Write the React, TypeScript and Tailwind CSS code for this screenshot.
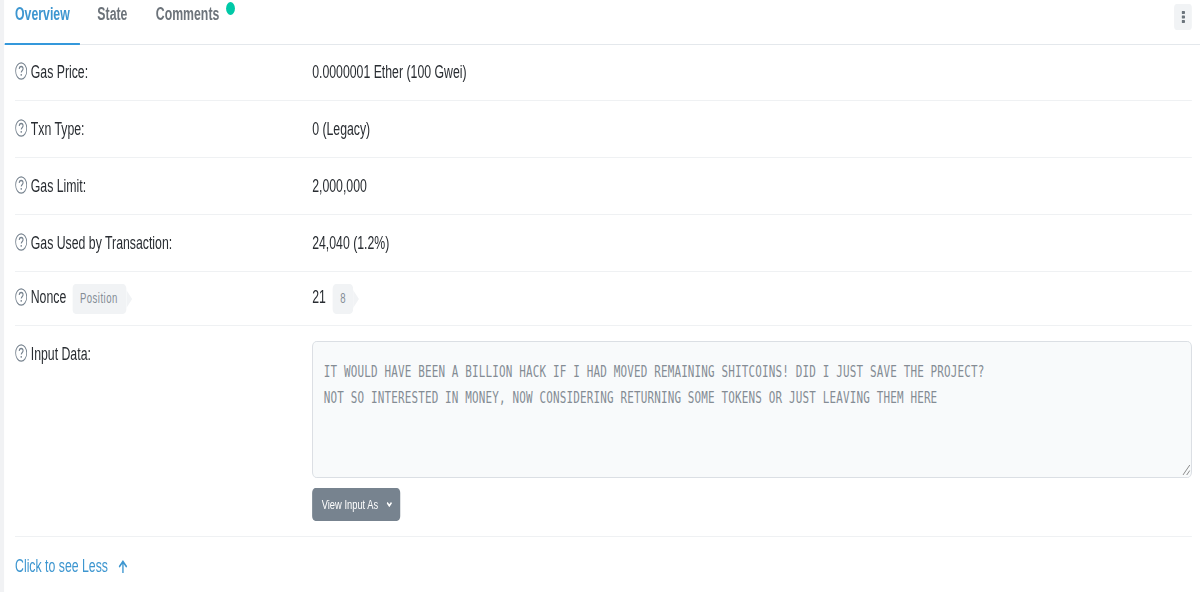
import type { ReactNode } from "react";

const tabs = ["Overview", "State", "Comments"];

const message = [
  "IT WOULD HAVE BEEN A BILLION HACK IF I HAD MOVED REMAINING SHITCOINS! DID I JUST SAVE THE PROJECT?",
  "NOT SO INTERESTED IN MONEY, NOW CONSIDERING RETURNING SOME TOKENS OR JUST LEAVING THEM HERE",
];

function HelpIcon() {
  return (
    <svg width="18" height="18" viewBox="0 0 18 18" fill="none" stroke="#77838f" className="-mt-[3px] mr-[5px] shrink-0">
      <circle cx="9" cy="9" r="8.1" strokeWidth="1.2" />
      <path d="M6.2 7C6.2 5.2 7.4 4.4 9 4.4s2.8.9 2.8 2.3c0 1.9-2.7 1.8-2.7 3.8" strokeWidth="1.5" />
      <path d="M9.1 11.9v1.8" strokeWidth="1.8" />
    </svg>
  );
}

function Badge({ children, className }: { children: ReactNode; className: string }) {
  return (
    <span className={`relative flex h-[30px] items-center rounded-[5px] bg-[#f1f3f5] pb-0.5 pl-[11px] text-[14px] tracking-[0.7px] text-[#848d96] ${className}`}>
      {children}
      <svg width="9" height="18" viewBox="0 0 9 18" className="absolute left-full top-1.5">
        <path d="M0 0L8.5 9L0 18Z" fill="#f1f3f5" />
      </svg>
    </span>
  );
}

function Row({ label, children, className }: { label: ReactNode; children: ReactNode; className: string }) {
  return (
    <div className={`flex items-center border-b border-[#eff1f3] ${className}`}>
      <div className="flex w-[435px] shrink-0 items-center">
        <HelpIcon />
        {label}
      </div>
      {children}
    </div>
  );
}

export default function App() {
  return (
    <div className="h-[592px] w-[1200px] overflow-hidden bg-white">
      {/* the panel is 1757 wide and condensed to fit the page */}
      <div className="h-[592px] w-[1757px] origin-top-left scale-x-[0.683] border-l-[6px] border-[#f1f2f4] font-['Liberation_Sans',Arial,sans-serif] text-[18px] leading-6 text-[#292d32]">
        <header className="flex h-[45px] justify-between border-b border-[#e4e8ec]">
          <nav className="flex pl-px font-bold text-[#6c737a]">
            {tabs.map((tab, i) => (
              <div
                key={tab}
                className={i === 0 ? "h-[45px] border-b-2 border-[#3498db] px-[15px] pt-0.5 text-[#3d96d0]" : "relative mr-[16px] pl-[25.5px] pt-0.5"}
              >
                {tab}
                {tab === "Comments" && <span className="absolute -right-[23px] top-[2px] h-[13px] w-[13px] rounded-full bg-[#00c9a7]" />}
              </div>
            ))}
          </nav>
          <button className="mr-[12px] mt-1 flex h-[26px] w-[26px] items-center justify-center rounded bg-[#f1f3f5]">
            <svg width="5" height="14" viewBox="0 0 5 14" fill="#6c757d">
              <rect y="1" width="5" height="3" rx="1" />
              <rect y="5.5" width="5" height="3" rx="1" />
              <rect y="10" width="5" height="3" rx="1" />
            </svg>
          </button>
        </header>

        <main className="pl-[16px] pr-[12px]">
          <Row className="h-14 pb-px" label="Gas Price:">0.0000001 Ether (100 Gwei)</Row>
          <Row className="h-[57px]" label="Txn Type:">0 (Legacy)</Row>
          <Row className="h-[57px]" label="Gas Limit:">2,000,000</Row>
          <Row className="h-[57px]" label="Gas Used by Transaction:">24,040 (1.2%)</Row>
          <Row
            className="h-[54px]"
            label={
              <>
                <span className="mr-[9px] -mt-1">Nonce</span>
                <Badge className="w-[79px]">Position</Badge>
              </>
            }
          >
            <span className="mr-[10px] -mt-1">21</span>
            <Badge className="w-[30px]">8</Badge>
          </Row>

          <section className="flex h-[211px] border-b border-[#eff1f3]">
            <div className="mt-4 flex h-6 w-[435px] shrink-0 items-center">
              <HelpIcon />
              Input Data:
            </div>
            <div className="mt-[15px] flex-1">
              <div className="relative h-[137px] rounded-md border border-[#d5dae0] bg-[#f8fafb] px-[16px] pt-[17px] font-['DejaVu_Sans_Mono',monospace] text-[16px] leading-[26px] tracking-[0.24px] text-[#848c94]">
                {message.map((line) => (
                  <p key={line} className="whitespace-nowrap">{line}</p>
                ))}
                <svg width="12" height="12" viewBox="0 0 12 12" stroke="#777" className="absolute bottom-px right-px">
                  <path d="M1 11L11 1M6.5 11L11 6.5" />
                </svg>
              </div>
              <button className="mt-2.5 flex h-[33px] w-[129px] items-center rounded-[5px] bg-[#77838f] pl-[14px] text-[13.7px] text-white">
                View Input As
                <svg width="8" height="5" viewBox="0 0 8 5" fill="none" stroke="white" strokeWidth="2" className="ml-[12px]">
                  <path d="M.8.6L4 3.8L7.2.6" />
                </svg>
              </button>
            </div>
          </section>

          <a className="mt-[17px] flex items-center text-[#3d96d0]">
            Click to see Less
            <svg width="14" height="14" viewBox="0 0 14 14" fill="none" stroke="currentColor" strokeWidth="2" className="ml-[15px] mt-0.5">
              <path d="M7 13V2M1.5 7L7 1.5L12.5 7" />
            </svg>
          </a>
        </main>
      </div>
    </div>
  );
}
